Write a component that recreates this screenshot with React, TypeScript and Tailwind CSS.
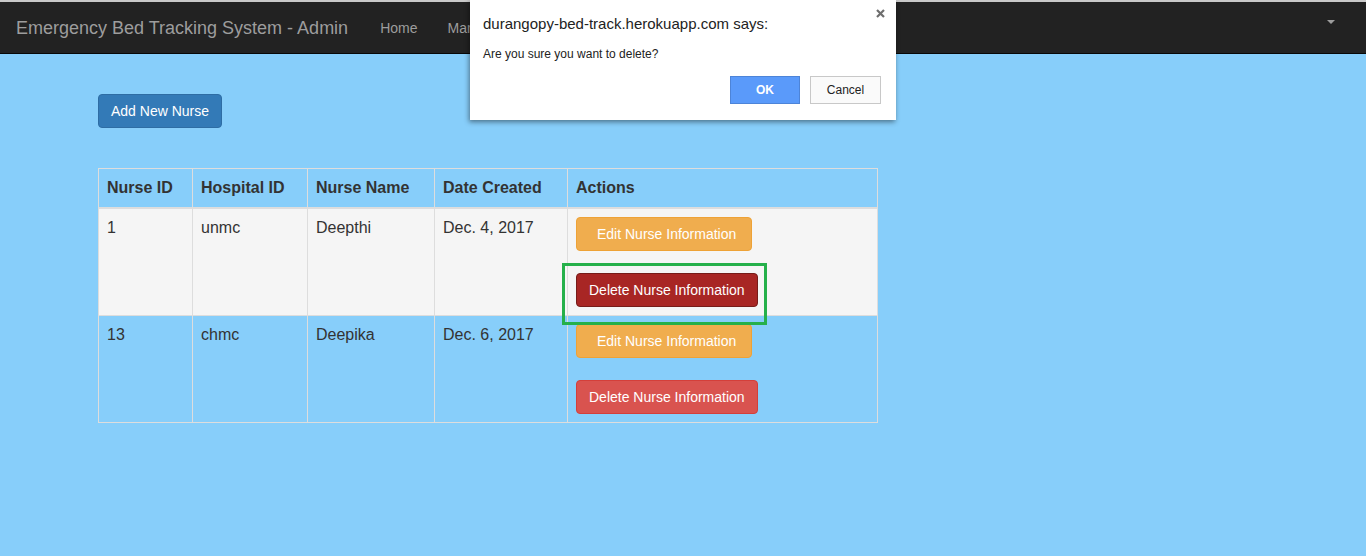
import React from "react";

type Nurse = {
  id: string;
  hospital: string;
  name: string;
  created: string;
};

const nurses: Nurse[] = [
  { id: "1", hospital: "unmc", name: "Deepthi", created: "Dec. 4, 2017" },
  { id: "13", hospital: "chmc", name: "Deepika", created: "Dec. 6, 2017" },
];

const font = { fontFamily: '"Liberation Sans", Arial, Helvetica, sans-serif' };

const Navbar = () => {
  return (
    <div className="h-[54px] border-t-2 border-[#c9c9c9] bg-[#222222] border-b border-b-[#080808] flex items-center justify-between">
      <div className="flex items-center">
        <span className="pl-4 pr-[17px] text-[18px] text-[#9d9d9d] leading-5">
          Emergency Bed Tracking System - Admin
        </span>
        <span className="px-[15px] text-[14px] text-[#9d9d9d] leading-5">Home</span>
        <span className="px-[15px] text-[14px] text-[#9d9d9d] leading-5">Manage Hospitals</span>
      </div>
      <div className="pr-[31px] pb-[11px]">
        <span className="block w-0 h-0 border-t-[4px] border-t-[#9d9d9d] border-x-[4px] border-x-transparent" />
      </div>
    </div>
  );
};

const ConfirmDialog = () => {
  return (
    <div className="absolute left-[470px] top-0 w-[426px] h-[120px] bg-white shadow-[-1px_2px_5px_rgba(0,0,0,0.45)]">
      <div className="absolute right-[11px] top-[9px]">
        <svg width="9" height="9" viewBox="0 0 9 9">
          <path d="M1 1 L8 8 M8 1 L1 8" stroke="#6e6e6e" strokeWidth="2.2" />
        </svg>
      </div>
      <div className="pl-[13px] pt-[15px] text-[15px] text-[#222] leading-[18px]">
        durangopy-bed-track.herokuapp.com says:
      </div>
      <div className="pl-[13px] pt-[14px] text-[12px] text-[#222] leading-[14px]">
        Are you sure you want to delete?
      </div>
      <div className="flex justify-end gap-[10px] pr-[15px] pt-[15px]">
        <button className="w-[70px] h-[28px] bg-[#5a9afa] border border-[#4d84d8] text-white text-[12px] font-bold">
          OK
        </button>
        <button className="w-[71px] h-[28px] bg-[#fafafa] border border-[#c8c8c8] text-[#222] text-[12px]">
          Cancel
        </button>
      </div>
    </div>
  );
};

const App = () => {
  return (
    <div className="relative min-h-[556px] bg-[#87cefa] text-[#333]" style={font}>
      <Navbar />
      <div className="pl-[98px] pt-[40px]">
        <button className="h-[34px] px-3 rounded bg-[#337ab7] border border-[#2e6da4] text-white text-[14px]">
          Add New Nurse
        </button>

        <table className="mt-[40px] w-[780px] border-collapse text-[16px] leading-[22px]">
          <thead>
            <tr>
              <th className="w-[94px] border border-[#ddd] border-b-2 px-2 py-2 text-left font-bold">Nurse ID</th>
              <th className="w-[115px] border border-[#ddd] border-b-2 px-2 py-2 text-left font-bold">Hospital ID</th>
              <th className="w-[127px] border border-[#ddd] border-b-2 px-2 py-2 text-left font-bold">Nurse Name</th>
              <th className="w-[133px] border border-[#ddd] border-b-2 px-2 py-2 text-left font-bold">Date Created</th>
              <th className="border border-[#ddd] border-b-2 px-2 py-2 text-left font-bold">Actions</th>
            </tr>
          </thead>
          <tbody>
            {nurses.map((nurse, i) => {
              const active = i === 0;
              return (
                <tr key={nurse.id} className={active ? "bg-[#f5f5f5]" : ""}>
                  <td className="border border-[#ddd] px-2 py-2 align-top">{nurse.id}</td>
                  <td className="border border-[#ddd] px-2 py-2 align-top">{nurse.hospital}</td>
                  <td className="border border-[#ddd] px-2 py-2 align-top">{nurse.name}</td>
                  <td className="border border-[#ddd] px-2 py-2 align-top">{nurse.created}</td>
                  <td className="border border-[#ddd] px-2 py-2 align-top">
                    <div className="flex flex-col items-start gap-[22px]">
                      <button className="h-[34px] pl-[20px] pr-[15px] rounded bg-[#f0ad4e] border border-[#eea236] text-white text-[14px]">
                        Edit Nurse Information
                      </button>
                      <div className="relative">
                        <button
                          className={`h-[34px] px-3 rounded border text-white text-[14px] ${
                            active
                              ? "bg-[#a82624] border-[#761c19]"
                              : "bg-[#d9534f] border-[#d43f3a]"
                          }`}
                        >
                          Delete Nurse Information
                        </button>
                        {active && (
                          <div className="absolute left-[-14px] top-[-10px] w-[205px] h-[62px] border-[3px] border-[#25b04a]" />
                        )}
                      </div>
                    </div>
                  </td>
                </tr>
              );
            })}
          </tbody>
        </table>
      </div>
      <ConfirmDialog />
    </div>
  );
};

export default App;
